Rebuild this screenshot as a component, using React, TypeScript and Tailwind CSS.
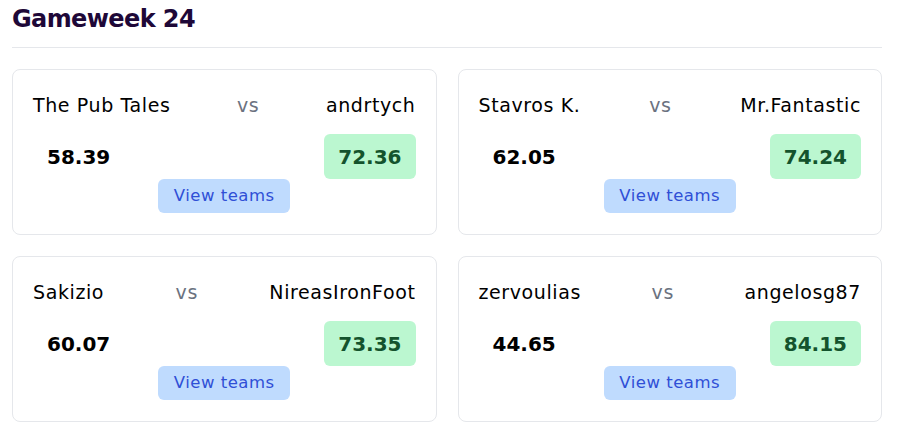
const matches = [
  { home: "The Pub Tales", away: "andrtych", homeScore: "58.39", awayScore: "72.36" },
  { home: "Stavros K.", away: "Mr.Fantastic", homeScore: "62.05", awayScore: "74.24" },
  { home: "Sakizio", away: "NireasIronFoot", homeScore: "60.07", awayScore: "73.35" },
  { home: "zervoulias", away: "angelosg87", homeScore: "44.65", awayScore: "84.15" },
];

type Match = (typeof matches)[number];

function MatchCard(props: { match: Match }) {
  const { match } = props;
  const homeWins = Number(match.homeScore) > Number(match.awayScore);

  return (
    <div className="flex flex-col rounded-lg border border-[#e5e7eb] bg-white px-5 pt-5 pb-[21px]">
      <div className="flex h-7 items-center justify-between pt-[2px] text-[19px] tracking-[0.6px] text-black">
        <span>{match.home}</span>
        <span className="text-[#6b7280]">vs</span>
        <span>{match.away}</span>
      </div>

      <div className="mt-4 flex items-center justify-between text-xl font-bold">
        <span
          className={`flex h-[45px] items-center rounded-md px-[14px] ${homeWins ? "bg-[#bbf7d0] text-[#14532d]" : "text-black"}`}
        >
          {match.homeScore}
        </span>
        <span
          className={`flex h-[45px] items-center rounded-md px-[14px] ${homeWins ? "text-black" : "bg-[#bbf7d0] text-[#14532d]"}`}
        >
          {match.awayScore}
        </span>
      </div>

      <div className="flex justify-center">
        <button className="h-[34px] w-[132px] rounded-md bg-[#bfdbfe] text-[16.5px] tracking-[0.5px] text-[#2f4fd6]">
          View teams
        </button>
      </div>
    </div>
  );
}

export default function App() {
  return (
    <div className="min-h-screen bg-white pr-4 pl-3 font-['DejaVu_Sans',sans-serif]">
      <h2 className="pt-[3px] text-2xl leading-8 font-semibold tracking-[-0.6px] text-[#1e0838]">Gameweek 24</h2>
      <div className="mt-[12px] border-b border-[#e5e7eb]" />

      <section className="mt-[21px] grid grid-cols-2 gap-[21px]">
        {matches.map((match) => (
          <MatchCard key={match.home} match={match} />
        ))}
      </section>
    </div>
  );
}
